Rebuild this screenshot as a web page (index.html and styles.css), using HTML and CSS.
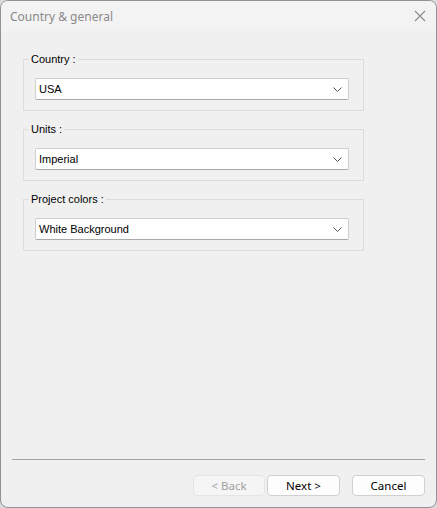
FILE: index.html
```html
<!DOCTYPE html>
<html lang="en">

<head>
    <meta charset="UTF-8">
    <title>Country &amp; general</title>
    <link rel="stylesheet" href="styles.css">
</head>

<body>
    <div class="window">
        <div class="titlebar">
            <span class="title">Country &amp; general</span>
            <svg class="close" width="12" height="12" viewBox="0 0 12 12">
                <path d="M1 1 L11 11 M11 1 L1 11" stroke="#8a8a8a" stroke-width="1.1" fill="none" />
            </svg>
        </div>

        <div class="content">
            <fieldset class="group">
                <legend>Country :</legend>
                <div class="combo">
                    <span>USA</span>
                    <svg width="9" height="5" viewBox="0 0 9 5"><path d="M0.5 0.5 L4.5 4.5 L8.5 0.5" stroke="#555" fill="none" /></svg>
                </div>
            </fieldset>

            <fieldset class="group">
                <legend>Units :</legend>
                <div class="combo">
                    <span>Imperial</span>
                    <svg width="9" height="5" viewBox="0 0 9 5"><path d="M0.5 0.5 L4.5 4.5 L8.5 0.5" stroke="#555" fill="none" /></svg>
                </div>
            </fieldset>

            <fieldset class="group">
                <legend>Project colors :</legend>
                <div class="combo">
                    <span>White Background</span>
                    <svg width="9" height="5" viewBox="0 0 9 5"><path d="M0.5 0.5 L4.5 4.5 L8.5 0.5" stroke="#555" fill="none" /></svg>
                </div>
            </fieldset>
        </div>

        <div class="footer">
            <div class="separator"></div>
            <div class="buttons">
                <div class="btn disabled">&lt; Back</div>
                <div class="btn">Next &gt;</div>
                <div class="btn cancel">Cancel</div>
            </div>
        </div>
    </div>
</body>

</html>
```

FILE: styles.css
```css
body {
    margin: 0;
    background: #dadada;
    font-family: 'Liberation Sans', Arial, sans-serif;
    font-size: 11px;
    color: #000;
}

.window {
    box-sizing: border-box;
    width: 437px;
    height: 508px;
    border: 1px solid #8f9398;
    border-radius: 8px;
    background: #f0f0f0;
    overflow: hidden;
    display: flex;
    flex-direction: column;
}

.titlebar {
    height: 30px;
    background: #f3f3f3;
    display: flex;
    align-items: center;
    justify-content: space-between;
    padding: 0 9px 0 9px;
}

.title {
    font-family: 'Noto Sans', 'Open Sans', sans-serif;
    font-size: 12px;
    color: #8a8a8a;
}

.close {
    margin-right: 1px;
}

.content {
    flex: 1;
    padding: 22px 0 0 22px;
}

.group {
    width: 341px;
    box-sizing: border-box;
    margin: 0 0 12px 0;
    padding: 0 14px 10px 5px;
    border: 1px solid #dcdcdc;
}

.group legend {
    padding: 0 2px;
    line-height: 13px;
}

.combo {
    box-sizing: border-box;
    margin: 12px 0 0 6px;
    width: 314px;
    height: 22px;
    background: #fefefe;
    border: 1px solid #cfcfcf;
    border-bottom-color: #a9a9a9;
    border-radius: 2px;
    display: flex;
    align-items: center;
    justify-content: space-between;
    padding: 0 6px 0 3px;
}

.footer {
    padding: 0 11px 11px 11px;
}

.separator {
    height: 1px;
    background: #a0a0a0;
    margin-bottom: 15px;
}

.buttons {
    display: flex;
    justify-content: flex-end;
}

.btn {
    box-sizing: border-box;
    width: 73px;
    height: 21px;
    line-height: 19px;
    text-align: center;
    font-family: 'Noto Sans', 'Open Sans', sans-serif;
    font-size: 11.5px;
    background: #fdfdfd;
    border: 1px solid #d0d0d0;
    border-radius: 4px;
}

.btn + .btn {
    margin-left: 2px;
}

.btn.cancel {
    margin-left: 12px;
}

.btn.disabled {
    width: 72px;
    background: #f5f5f5;
    border-color: #e5e5e5;
    color: #a0a0a0;
}
```
